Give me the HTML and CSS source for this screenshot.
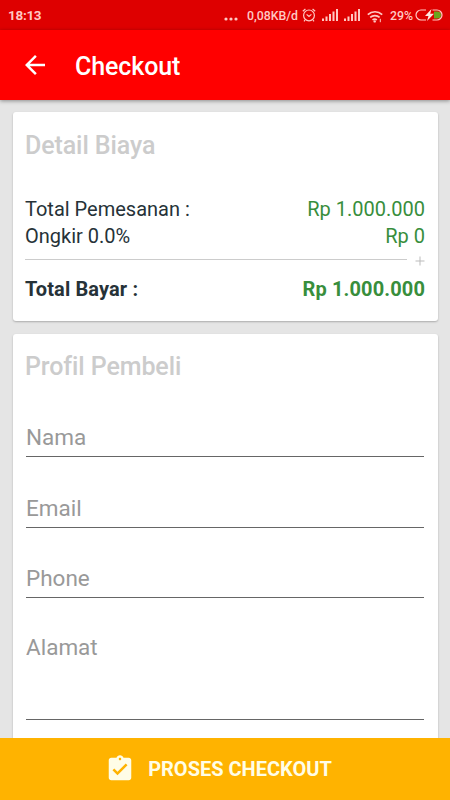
FILE: index.html
```html
<!DOCTYPE html>
<html lang="id">
<head>
    <meta charset="UTF-8">
    <meta name="viewport" content="width=device-width, initial-scale=1.0">
    <title>Checkout</title>
    <link rel="stylesheet" href="styles.css">
</head>
<body>
    <div class="status-bar">
        <span class="clock">18:13</span>
        <svg class="dots" width="14" height="4" viewBox="0 0 14 4">
            <circle cx="2" cy="2" r="1.6"/><circle cx="7" cy="2" r="1.6"/><circle cx="12" cy="2" r="1.6"/>
        </svg>
        <span class="speed">0,08KB/d</span>
        <svg class="alarm" width="14" height="14" viewBox="0 0 14 14">
            <circle cx="7" cy="7.4" r="5.4"/>
            <path d="M4.6 6.4L7 8.4l2.4-2M.8 3.2L3.4 1M13.2 3.2L10.6 1M3 12l-1 1.3M11 12l1 1.3"/>
        </svg>
        <svg class="signal" width="16" height="12" viewBox="0 0 16 12">
            <path d="M0 9.500h2V12H0zM3.500 7.500h2V12h-2zM7 5h2v7H7zM10.500 2.500h2V12h-2zM14 0h2v12h-2z"/>
        </svg>
        <svg class="signal signal-two" width="16" height="12" viewBox="0 0 16 12">
            <path d="M0 9.500h2V12H0zM3.500 7.500h2V12h-2zM7 5h2v7H7zM10.500 2.500h2V12h-2zM14 0h2v12h-2z"/>
        </svg>
        <svg class="wifi" width="16" height="13" viewBox="0 0 16 13">
            <path d="M.8 4.600a10.500 10.500 0 0 1 14.400 0M3.200 7.400a7 7 0 0 1 9.400 0M5.500 9.900a4 4 0 0 1 4.400 0"/>
            <circle cx="7.700" cy="11.400" r="1.200"/>
            <path class="wifi-arrow" d="M13.300 8.800v3.400"/>
        </svg>
        <span class="percent">29%</span>
        <svg class="battery" width="28" height="12" viewBox="0 0 28 12">
            <path class="level" d="M19 2.500h3.500a3.500 3.500 0 0 1 0 7H19z"/>
            <path class="shell" d="M11 1H6a5 5 0 0 0 0 10h5M17.500 1H22a5 5 0 0 1 0 10h-4.500"/>
            <path class="bolt" d="M16.500 0L10 7h3.500L12 12l7-7.200h-3.800z"/>
        </svg>
    </div>

    <header class="toolbar">
        <svg class="back" width="30" height="30" viewBox="0 0 24 24">
            <path d="M20 11H7.830l5.590-5.590L12 4l-8 8 8 8 1.410-1.410L7.830 13H20v-2z"/>
        </svg>
        <h1>Checkout</h1>
    </header>

    <main class="content">
        <section class="card cost">
            <h2>Detail Biaya</h2>
            <div class="row">
                <span>Total Pemesanan :</span>
                <span class="price">Rp 1.000.000</span>
            </div>
            <div class="row">
                <span>Ongkir 0.0%</span>
                <span class="price">Rp 0</span>
            </div>
            <div class="sum">
                <span class="line"></span>
                <svg width="10" height="10" viewBox="0 0 10 10"><path d="M5 .5v9M.5 5h9"/></svg>
            </div>
            <div class="row total">
                <span>Total Bayar :</span>
                <span class="price">Rp 1.000.000</span>
            </div>
        </section>

        <section class="card profile">
            <h2>Profil Pembeli</h2>
            <form>
                <input type="text" name="nama" placeholder="Nama">
                <input type="email" name="email" placeholder="Email">
                <input type="tel" name="phone" placeholder="Phone">
                <textarea name="alamat" placeholder="Alamat"></textarea>
            </form>
        </section>
    </main>

    <button class="process" type="button">
        <svg width="30" height="30" viewBox="0 0 24 24">
            <path d="M19 3h-4.180C14.400 1.840 13.300 1 12 1s-2.400.84-2.820 2H5c-1.100 0-2 .9-2 2v14c0 1.100.9 2 2 2h14c1.100 0 2-.9 2-2V5c0-1.100-.9-2-2-2zm-7 0c.55 0 1 .45 1 1s-.45 1-1 1-1-.45-1-1 .45-1 1-1zm-2 14l-4-4 1.410-1.410L10 14.170l6.590-6.590L18 9l-8 8z"/>
        </svg>
        <span>PROSES CHECKOUT</span>
    </button>
</body>
</html>
```
FILE: styles.css
```css
:root {
    --red: #ff0000;
    --dark-red: #de0000;
    --amber: #ffb300;
    --green: #388e3c;
    --text: #263238;
    --status: #ffc9c4;
}
* {
    box-sizing: border-box;
}
body {
    margin: 0;
    height: 100vh;
    display: flex;
    flex-direction: column;
    overflow: hidden;
    font-family: Roboto, sans-serif;
    background: #e5e5e5;
    color: var(--text);
}
.status-bar {
    flex: none;
    display: flex;
    align-items: center;
    height: 30px;
    padding: 0 7px 0 8px;
    background: var(--dark-red);
    color: var(--status);
    fill: var(--status);
    font-size: 12.3px;
    font-weight: 500;
}
.clock {
    margin-right: auto;
    font-size: 13.5px;
    font-weight: 700;
    letter-spacing: -0.3px;
}
.dots {
    margin: 8px 9px 0 0;
}
.speed {
    margin-top: 1px;
}
.alarm {
    margin: 0 6px 0 4px;
    fill: none;
    stroke: var(--status);
    stroke-width: 1.2;
}
.signal-two {
    margin-left: 6px;
}
.wifi {
    margin: 2px 7px 0 7px;
    fill: none;
    stroke: var(--status);
    stroke-width: 1.7;
}
.wifi circle {
    fill: var(--status);
    stroke: none;
}
.wifi-arrow {
    stroke-width: 1;
}
.percent {
    margin-top: 1px;
}
.battery {
    margin-left: 2px;
}
.shell {
    fill: none;
    stroke: var(--status);
    stroke-width: 1.2;
}
.level {
    fill: #6aa51e;
}
.bolt {
    fill: #ffe6e0;
}
.toolbar {
    flex: none;
    display: flex;
    align-items: center;
    height: 70px;
    padding-left: 20px;
    background: var(--red);
    color: #fff;
    fill: #fff;
    box-shadow: 0 1px 4px rgba(0, 0, 0, 0.4);
    z-index: 1;
}
h1 {
    margin: 2px 0 0 25px;
    font-size: 25px;
    font-weight: 500;
    letter-spacing: -0.1px;
}
.content {
    flex: 1;
    min-height: 0;
    overflow: hidden;
    padding: 12px 12.5px 0;
}
.card {
    background: #fff;
    border-radius: 3px;
    padding: 18.5px 12.5px 0;
    margin-bottom: 12.5px;
    box-shadow: 0 1px 2px rgba(0, 0, 0, 0.25);
}
h2 {
    margin: 0;
    font-size: 25px;
    line-height: 30px;
    font-weight: 500;
    letter-spacing: -0.1px;
    color: #ccc;
}
.cost {
    height: 209px;
}
.cost h2 {
    margin-bottom: 35px;
}
.row {
    display: flex;
    justify-content: space-between;
    font-size: 20px;
    line-height: 27px;
}
.price {
    color: var(--green);
}
.sum {
    display: flex;
    align-items: center;
    justify-content: space-between;
    height: 25px;
    padding-bottom: 2px;
}
.line {
    width: 382px;
    height: 1px;
    margin-bottom: 3px;
    background: #ccc;
}
.sum svg {
    fill: none;
    stroke: #bbb;
}
.total {
    font-weight: 700;
    line-height: 28px;
    letter-spacing: 0.12px;
}
.profile {
    height: 460px;
}
form {
    display: flex;
    flex-direction: column;
    padding: 27px 1px 0;
}
input,
textarea {
    width: 100%;
    height: 48px;
    margin: 0 0 22.5px;
    padding: 9px 0 0;
    border: none;
    border-bottom: 1px solid #666;
    border-radius: 0;
    outline: none;
    background: none;
    resize: none;
    font-family: inherit;
    font-size: 22.5px;
}
textarea {
    height: 99.5px;
    padding-top: 13px;
    overflow: hidden;
}
::placeholder {
    color: #999;
}
.process {
    flex: none;
    display: flex;
    align-items: center;
    justify-content: center;
    gap: 13px;
    height: 62.5px;
    padding: 0 13px 0 0;
    border: none;
    background: var(--amber);
    color: #fffde7;
    fill: #fffde7;
    font-family: inherit;
    font-size: 20px;
    font-weight: 700;
}
```
